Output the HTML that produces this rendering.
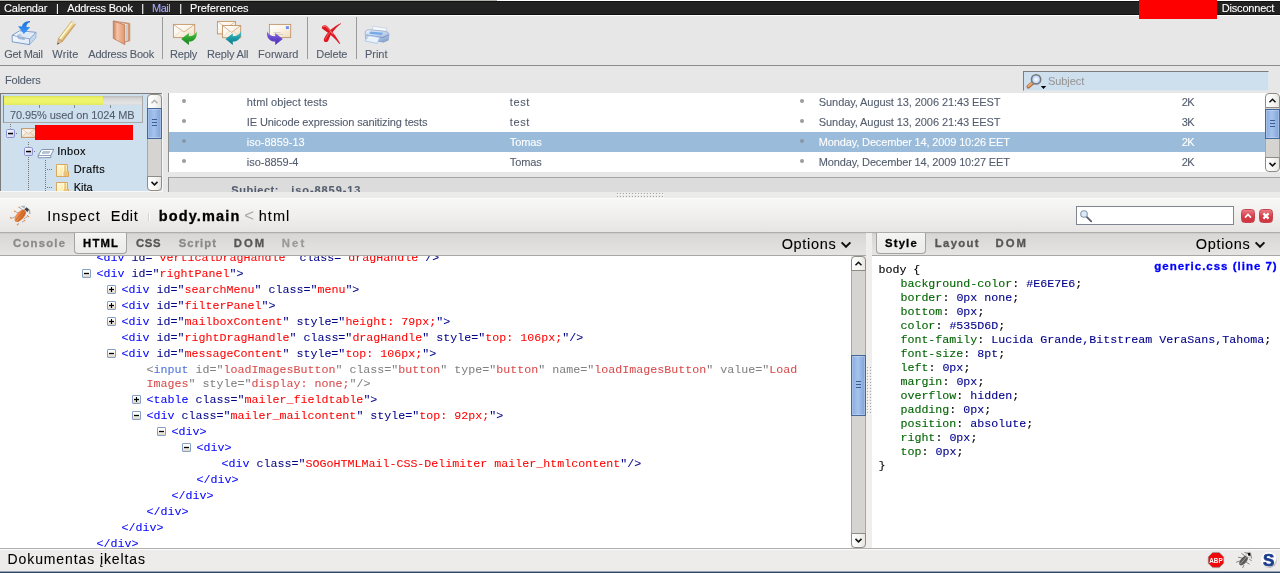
<!DOCTYPE html>
<html><head><meta charset="utf-8"><title>SOGo</title>
<style>
html,body{margin:0;padding:0;}
body{background:#E6E7E6;width:1280px;height:573px;overflow:hidden;font-family:"Liberation Sans",sans-serif;}
#root{will-change:transform;position:relative;width:1280px;height:573px;overflow:hidden;background:#E6E7E6;}
#root div,#root span,#root svg,#root i{position:absolute;box-sizing:border-box;}
.t{white-space:pre;-webkit-text-stroke:0.1px currentColor;}
#root .c span{position:static;}
.c{-webkit-text-stroke:0.04px currentColor;white-space:pre;font:11.667px/16px "Liberation Mono",monospace;color:#000088;height:16px;}
.c b{font-weight:normal;color:#ff0000;}
.c em{font-style:normal;color:#0000ff;}
.c.h{color:#808080;}
.c.h u{text-decoration:none;color:#4d72da;}
.c.h b{color:#d94a4a;}
.c.e{color:#0000ff;}
.s{-webkit-text-stroke:0.1px currentColor;white-space:pre;font:11.667px/14px "Liberation Mono",monospace;color:#000;height:14px;}
.s i{font-style:normal;color:#006400;position:static !important;}
.s b{font-weight:normal;color:#00008b;}
.tw{width:9px;height:9px;border:1px solid #86a0c2;border-radius:1px;background:linear-gradient(#fff 30%,#ddd6c8 100%);}
.tw:before{content:"";position:absolute;left:1px;top:3px;width:5px;height:1px;background:#000;box-shadow:0 .5px 0 rgba(0,0,0,.3),0 -.5px 0 rgba(0,0,0,.3);}
.tw.p:after{content:"";position:absolute;left:3px;top:1px;width:1px;height:5px;background:#000;box-shadow:.5px 0 0 rgba(0,0,0,.12),-.5px 0 0 rgba(0,0,0,.12);}
.sep{width:1px;background:#9a9a9a;top:17px;height:42px;}
.dot{width:4px;height:4px;border-radius:2px;background:#9a9a9a;}

</style></head>
<body>
<div id="root">
<!-- top strip -->
<div style="left:0;top:0;width:1280px;height:1px;background:#fff"></div>
<div style="left:0;top:0;width:497px;height:1px;background:#b3afab"></div>
<div style="left:0;top:1px;width:1280px;height:14px;background:#222;border-top:1px solid #111;border-bottom:1px solid #111"></div>
<div style="left:0;top:15px;width:1280px;height:1px;background:#fff"></div>
<div style="left:1139px;top:0;width:78px;height:19px;background:#fe0000"></div>
<!-- toolbar -->
<div style="left:0;top:65px;width:1280px;height:1px;background:#8c8c8c"></div>
<div class="sep" style="left:162px"></div>
<div class="sep" style="left:307px"></div>
<div class="sep" style="left:356px"></div>
<svg style="left:0;top:0" width="400" height="66" viewBox="0 0 400 66">
<defs>
<linearGradient id="gBlue" x1="0" y1="0" x2="0" y2="1"><stop offset="0" stop-color="#1c6fd8"/><stop offset="1" stop-color="#3f9bff"/></linearGradient>
<linearGradient id="gTray" x1="0" y1="0" x2="1" y2="1"><stop offset="0" stop-color="#ffffff"/><stop offset="1" stop-color="#d5e4f5"/></linearGradient>
<linearGradient id="gPen" x1="0" y1="0" x2="1" y2="1"><stop offset="0" stop-color="#fff6c4"/><stop offset=".5" stop-color="#ecd28e"/><stop offset="1" stop-color="#c9a25c"/></linearGradient>
<linearGradient id="gBook" x1="0" y1="0" x2="1" y2="0"><stop offset="0" stop-color="#c9805f"/><stop offset=".35" stop-color="#f7c4a4"/><stop offset="1" stop-color="#dc9672"/></linearGradient>
<linearGradient id="gEnv" x1="0" y1="0" x2="1" y2="1"><stop offset="0" stop-color="#ffffff"/><stop offset=".5" stop-color="#fbf3e6"/><stop offset="1" stop-color="#ecd9be"/></linearGradient>
<linearGradient id="gGreen" x1="0" y1="0" x2="0" y2="1"><stop offset="0" stop-color="#5cc85c"/><stop offset=".5" stop-color="#2ba32b"/><stop offset="1" stop-color="#1c7f1c"/></linearGradient>
<linearGradient id="gTeal" x1="0" y1="0" x2="0" y2="1"><stop offset="0" stop-color="#4cc0c8"/><stop offset=".5" stop-color="#1b9aa6"/><stop offset="1" stop-color="#107886"/></linearGradient>
<linearGradient id="gPurp" x1="0" y1="0" x2="0" y2="1"><stop offset="0" stop-color="#8c74e8"/><stop offset=".5" stop-color="#6848cc"/><stop offset="1" stop-color="#4c2cae"/></linearGradient>
<linearGradient id="gPrn" x1="0" y1="0" x2=".6" y2="1"><stop offset="0" stop-color="#eef2f9"/><stop offset=".55" stop-color="#c3d2ea"/><stop offset="1" stop-color="#8ea7d2"/></linearGradient>
</defs>
<!-- get mail -->
<g>
<path d="M19.6 30.8 L35.9 32.3 L35.6 37.8 L29.5 44.7 L12.2 41.8 L12.2 35.3 Z" fill="url(#gTray)" stroke="#7b9bcb" stroke-width="1" stroke-linejoin="round"/>
<path d="M29.7 38.9 L35.7 32.5 L35.5 37.7 L29.6 44.4 Z" fill="#c3d8f0"/>
<path d="M12.2 35.3 L29.6 38.9 L35.9 32.3 M29.6 38.9 L29.5 44.7" fill="none" stroke="#7b9bcb" stroke-width="0.9"/>
<path d="M15.4 35.2 L20.4 32.0 L32.6 33.3 L28.6 37.6 Z" fill="#dfe9f5"/>
<path d="M16.6 35.6 L19.8 33.6 L23.0 36.9 Z" fill="#b9cce2"/>
<path d="M16.8 36.6 L18.6 39.0 L24.6 40.1 L25.4 38.3 Z" fill="#9fb6d2"/>
<path d="M30 21 C25.5 21.2 22.4 23.2 22.0 26.6 L18.1 26.2 L23.8 34.1 L30.1 27.3 L26.4 27.0 C26.4 24.4 27.8 22.4 30 22.2 Z" fill="url(#gBlue)"/>
</g>
<!-- write (pencil) -->
<g>
<path d="M71.6 21.3 L75.8 24.0 L62.6 41.4 L58.4 38.6 Z" fill="url(#gPen)" stroke="#b8925a" stroke-width="0.6"/>
<path d="M72.4 22.6 L59.8 39.0" stroke="#fffbd6" stroke-width="1.3" fill="none"/>
<path d="M74.9 24.3 L62.2 40.6" stroke="#c49a58" stroke-width="0.9" fill="none"/>
<path d="M58.4 38.6 L62.6 41.4 L57.2 44.6 Z" fill="#dcb88c" stroke="#b08a5c" stroke-width="0.5"/>
<path d="M57.2 44.6 L57.9 42.4 L59.2 43.4 Z" fill="#4a4038"/>
<path d="M72.2 21.0 L76.1 23.6 L75.2 24.8 L71.3 22.2 Z" fill="#fbf6ea" stroke="#c9a678" stroke-width="0.4"/>
</g>
<!-- address book -->
<g>
<path d="M113.3 21.0 L129.8 23.4 L129.8 40.8 L124.8 42.0 Z" fill="#d99874" stroke="#c07e5e" stroke-width="0.7"/>
<path d="M115.6 21.8 L127.7 24.6 L127.7 40.2 L124.9 41.4 L124.9 24.8 Z" fill="#f6f4f2"/>
<path d="M126.0 24.6 L127.7 25.0 L127.7 40.2 L126.0 40.9 Z" fill="#c9c7c6"/>
<path d="M113.3 21.0 L124.8 24.9 L124.8 44.6 L113.3 38.4 Z" fill="url(#gBook)" stroke="#bd7a5b" stroke-width="0.8" stroke-linejoin="round"/>
</g>
<!-- reply -->
<g>
<rect x="173.4" y="24.4" width="21.3" height="13.2" fill="url(#gEnv)" stroke="#c29468" stroke-width="0.9"/>
<path d="M173.6 24.6 L184 32 L194.5 24.6" fill="none" stroke="#c9a27c" stroke-width="0.8"/>
<path d="M173.6 37.4 L181.5 30.6 M194.5 37.4 L186.5 30.6" fill="none" stroke="#e3cdb0" stroke-width="0.6"/>
<path d="M181.2 38.9 L188.9 33.0 L188.9 36.2 C192.6 36.2 195.4 34.6 196.6 31.4 C197.6 37.6 194.2 41.4 188.9 41.6 L188.9 45.0 Z" fill="url(#gGreen)"/>
</g>
<!-- reply all -->
<g>
<rect x="217.4" y="21.4" width="18.2" height="12.5" fill="url(#gEnv)" stroke="#c29468" stroke-width="0.9"/>
<path d="M217.6 21.6 L226.5 28 L235.4 21.6" fill="none" stroke="#d3b090" stroke-width="0.7"/>
<rect x="222.5" y="25.5" width="18.2" height="12.2" fill="url(#gEnv)" stroke="#c29468" stroke-width="0.9"/>
<path d="M222.7 25.7 L231.6 32.4 L240.5 25.7" fill="none" stroke="#c9a27c" stroke-width="0.8"/>
<path d="M222.7 37.5 L229.4 31 M240.5 37.5 L233.8 31" fill="none" stroke="#e3cdb0" stroke-width="0.6"/>
<path d="M225.5 38.9 L232.8 33.2 L232.8 36.2 C236.6 36.2 239.6 34.6 240.9 31.4 C241.9 37.6 238.4 41.4 232.8 41.6 L232.8 45.0 Z" fill="url(#gTeal)"/>
</g>
<!-- forward -->
<g>
<rect x="269.4" y="24.4" width="21.3" height="13.2" fill="url(#gEnv)" stroke="#c29468" stroke-width="0.9"/>
<rect x="285.9" y="26.2" width="3" height="2.8" fill="#6e8ff2"/>
<path d="M273.3 32.5 H280.6 M273.3 34.4 H283.4" stroke="#c9bca8" stroke-width="0.6"/>
<path d="M282.8 38.9 L275.2 33.0 L275.2 36.2 C271.4 36.2 268.4 34.6 267.1 31.4 C266.1 37.6 269.7 41.4 275.2 41.6 L275.2 45.0 Z" fill="url(#gPurp)"/>
</g>
<!-- delete X -->
<g fill="#e0161f">
<path d="M321.9 27.6 C322.2 25.2 325.4 24.4 327.4 26.4 C332.4 31.4 336.8 37.2 340.2 43.6 L339.4 44.1 C335.4 38.8 329.4 33.8 323.4 29.6 C322.3 28.9 321.8 28.4 321.9 27.6 Z"/>
<path d="M341.1 23.7 C335.6 27.6 330.6 33.4 328.4 40.4 C327.8 42.2 325.2 42.6 324.3 41.4 C323.5 40.2 323.8 38.8 324.6 37.4 C327.8 31.6 333.8 26.6 340.7 23.3 Z"/>
</g>
<path d="M323.0 27.2 C323.8 25.9 325.6 25.9 326.8 27.2 C329.2 29.6 331.2 32 333.2 34.6" fill="none" stroke="#f7959a" stroke-width="0.8"/>
<path d="M325.2 39.6 C326.6 36.4 328.8 33.4 331.4 30.8" fill="none" stroke="#f58a90" stroke-width="0.6"/>
<!-- print -->
<g>
<path d="M372.9 26.3 L386.9 28.2 L386.0 31.6 L372.0 30.0 Z" fill="#f6f8fb" stroke="#b7c4da" stroke-width="0.6"/>
<path d="M365.2 32.0 C365.4 30.4 367.4 29.6 370.4 29.8 L384.6 31.2 C387.4 31.6 389.0 32.6 388.9 34.4 L388.3 40.2 L383.4 42.2 L365.6 39.0 Z" fill="url(#gPrn)" stroke="#7d97c2" stroke-width="0.6"/>
<path d="M370.6 31.5 L383.2 32.8 L381.4 35.0 L369.0 33.7 Z" fill="#74aaea"/>
<path d="M366.0 35.0 L383.0 37.6 L388.6 35.0" fill="none" stroke="#6f8cbd" stroke-width="0.8"/>
<path d="M368.8 35.6 L379.8 37.4 L377.2 43.5 L365.0 40.9 Z" fill="#e9f2fc" stroke="#8fb5e6" stroke-width="0.6"/>
</g>
</svg>

<!-- search box -->
<div style="left:1023px;top:71px;width:246px;height:20px;background:#cedfee;border-top:1px solid #7c7c7c;border-left:1px solid #7c7c7c;border-bottom:1px solid #dfe6ec;border-right:1px solid #dfe6ec"></div>
<!-- folder tree -->
<div style="left:0;top:93px;width:163px;height:99px;background:#f7f7f7"></div>
<div id="tree" style="left:0;top:93px;width:162px;height:98px;background:#cedfee;border-top:1px solid #7c7c7c;border-left:1px solid #7c7c7c;overflow:hidden">
  <div style="left:2px;top:1px;width:140px;height:28px;border:1px solid #a8a8a8;border-top-color:transparent;border-left-color:#8c8c90"></div>
  <div style="left:3px;top:2px;width:138px;height:9px;background:linear-gradient(#bcbcbc,#d6d6d6 30%,#e4e4e4 80%,#dadada)"></div>
  <div style="left:3px;top:2px;width:99px;height:9px;background:linear-gradient(#dde25a,#eef56a 30%,#eef56a 70%,#e3e85d)"></div>
  <div style="left:38px;top:11px;width:1px;height:3px;background:#808890"></div>
  <div style="left:73px;top:11px;width:1px;height:3px;background:#808890"></div>
  <div style="left:109px;top:11px;width:1px;height:3px;background:#808890"></div>
  <div style="left:34px;top:31px;width:98px;height:15px;background:#fe0000"></div>
</div>
<!-- mail list -->
<div id="list" style="left:168px;top:93px;width:1112px;height:79px;background:#fff;border-left:1px solid #8e8e8e"></div>
<div style="left:169px;top:132px;width:1096px;height:20px;background:#9abbd9"></div>
<!-- message header -->
<div id="msg" style="left:168px;top:177px;width:1112px;height:15px;background:#dcdcdc;border-left:1px solid #8f8f8f;border-top:1px solid #a5a5a5;overflow:hidden">
</div>
<!-- firebug splitter + toolbar -->
<div style="left:0;top:192px;width:1280px;height:6px;background:#ebebea"></div>
<div style="left:0;top:198px;width:1280px;height:35px;background:linear-gradient(#f7f7f6,#f0efee 50%,#e6e5e3);border-top:1px solid #fbfbfb;border-bottom:1px solid #adadab"></div>
<div style="left:0;top:233px;width:1280px;height:23px;background:linear-gradient(#c6c5c3,#d8d7d5 6%,#e5e4e2);border-bottom:1px solid #a9a7a3"></div>
<div style="left:866px;top:233px;width:6px;height:316px;background:#efeeed"></div>
<!-- selected tabs -->
<div style="left:74px;top:233px;width:53px;height:21px;background:linear-gradient(#f4f4f3,#ebebea);border:1px solid #a3a3a3;border-top:none;border-radius:0 0 4px 4px"></div>
<div style="left:876px;top:233px;width:50px;height:21px;background:linear-gradient(#f4f4f3,#ebebea);border:1px solid #a3a3a3;border-top:none;border-radius:0 0 4px 4px"></div>
<!-- firebug search -->
<div style="left:1076px;top:206px;width:158px;height:19px;background:#fff;border:1px solid #7f8593"></div>
<!-- panels -->
<div id="hp" style="left:0;top:256px;width:851px;height:292px;background:#fff;overflow:hidden">
<div class="c " style="left:96.5px;top:-6.4px"><em>&lt;div</em> id= <b>verticalDragHandle</b>  class= <b>dragHandle</b> /&gt;</div>
<div class="c " style="left:96.5px;top:9.6px"><em>&lt;div</em> id="<b>rightPanel</b>"&gt;</div>
<div class="tw " style="left:82px;top:13px"></div>
<div class="c " style="left:121.5px;top:25.6px"><em>&lt;div</em> id="<b>searchMenu</b>" class="<b>menu</b>"&gt;</div>
<div class="tw p" style="left:107px;top:29px"></div>
<div class="c " style="left:121.5px;top:41.6px"><em>&lt;div</em> id="<b>filterPanel</b>"&gt;</div>
<div class="tw p" style="left:107px;top:45px"></div>
<div class="c " style="left:121.5px;top:57.6px"><em>&lt;div</em> id="<b>mailboxContent</b>" style="<b>height: 79px;</b>"&gt;</div>
<div class="tw p" style="left:107px;top:61px"></div>
<div class="c " style="left:121.5px;top:73.6px"><em>&lt;div</em> id="<b>rightDragHandle</b>" class="<b>dragHandle</b>" style="<b>top: 106px;</b>"/&gt;</div>
<div class="c " style="left:121.5px;top:89.6px"><em>&lt;div</em> id="<b>messageContent</b>" style="<b>top: 106px;</b>"&gt;</div>
<div class="tw " style="left:107px;top:93px"></div>
<div class="c h" style="left:146.5px;top:105.6px">&lt;<u>input</u> id="<b>loadImagesButton</b>" class="<b>button</b>" type="<b>button</b>" name="<b>loadImagesButton</b>" value="<b>Load</b></div>
<div class="c h" style="left:146.5px;top:119.6px"><b>Images</b>" style="<b>display: none;</b>"/&gt;</div>
<div class="c " style="left:146.5px;top:135.6px"><em>&lt;table</em> class="<b>mailer_fieldtable</b>"&gt;</div>
<div class="tw p" style="left:132px;top:139px"></div>
<div class="c " style="left:146.5px;top:151.6px"><em>&lt;div</em> class="<b>mailer_mailcontent</b>" style="<b>top: 92px;</b>"&gt;</div>
<div class="tw " style="left:132px;top:155px"></div>
<div class="c " style="left:171.5px;top:167.6px"><em>&lt;div&gt;</em></div>
<div class="tw " style="left:157px;top:171px"></div>
<div class="c " style="left:196.5px;top:183.6px"><em>&lt;div&gt;</em></div>
<div class="tw " style="left:182px;top:187px"></div>
<div class="c " style="left:221.5px;top:199.6px"><em>&lt;div</em> class="<b>SOGoHTMLMail-CSS-Delimiter mailer_htmlcontent</b>"/&gt;</div>
<div class="c e" style="left:196.5px;top:215.6px">&lt;/div&gt;</div>
<div class="c e" style="left:171.5px;top:231.6px">&lt;/div&gt;</div>
<div class="c e" style="left:146.5px;top:247.6px">&lt;/div&gt;</div>
<div class="c e" style="left:121.5px;top:263.6px">&lt;/div&gt;</div>
<div class="c e" style="left:96.5px;top:279.6px">&lt;/div&gt;</div>
</div>
<div id="sp" style="left:872px;top:256px;width:408px;height:292px;background:#fff;overflow:hidden">
<div class="s" style="left:6.4px;top:6.8px">body {</div>
<div class="s" style="left:28.4px;top:20.8px"><i>background-color</i>: <b>#E6E7E6</b>;</div>
<div class="s" style="left:28.4px;top:34.8px"><i>border</i>: <b>0px none</b>;</div>
<div class="s" style="left:28.4px;top:48.8px"><i>bottom</i>: <b>0px</b>;</div>
<div class="s" style="left:28.4px;top:62.8px"><i>color</i>: <b>#535D6D</b>;</div>
<div class="s" style="left:28.4px;top:76.8px"><i>font-family</i>: <b>Lucida Grande,Bitstream VeraSans,Tahoma</b>;</div>
<div class="s" style="left:28.4px;top:90.8px"><i>font-size</i>: <b>8pt</b>;</div>
<div class="s" style="left:28.4px;top:104.8px"><i>left</i>: <b>0px</b>;</div>
<div class="s" style="left:28.4px;top:118.8px"><i>margin</i>: <b>0px</b>;</div>
<div class="s" style="left:28.4px;top:132.8px"><i>overflow</i>: <b>hidden</b>;</div>
<div class="s" style="left:28.4px;top:146.8px"><i>padding</i>: <b>0px</b>;</div>
<div class="s" style="left:28.4px;top:160.8px"><i>position</i>: <b>absolute</b>;</div>
<div class="s" style="left:28.4px;top:174.8px"><i>right</i>: <b>0px</b>;</div>
<div class="s" style="left:28.4px;top:188.8px"><i>top</i>: <b>0px</b>;</div>
<div class="s" style="left:6.4px;top:202.8px">}</div>
</div>
<div style="left:147px;top:104px;width:15px;height:77px;background:#d6d4d0;border-left:1px solid #aaa7a2;border-right:1px solid #aaa7a2"></div>
<div style="left:147px;top:94px;width:15px;height:15px;background:linear-gradient(90deg,#ffffff,#f6f6f4 55%,#e6e5e2);border:1px solid #8f8c86;border-radius:4px 4px 0 0"></div>
<div style="left:147px;top:176px;width:15px;height:15px;background:linear-gradient(90deg,#ffffff,#f6f6f4 55%,#e6e5e2);border:1px solid #8f8c86;border-radius:0 0 4px 4px"></div>
<svg style="left:147px;top:94px" width="15" height="15" viewBox="0 0 15 15"><path d="M4.5 9.3 L7.5 6.3 L10.5 9.3" fill="none" stroke="#b4b2ae" stroke-width="1.5"/></svg>
<svg style="left:147px;top:176px" width="15" height="15" viewBox="0 0 15 15"><path d="M4.5 5.9 L7.5 8.9 L10.5 5.9" fill="none" stroke="#111" stroke-width="1.5"/></svg>
<div style="left:147px;top:108px;width:15px;height:31px;background:linear-gradient(90deg,#86abe0,#a7c3ec 45%,#7fa3d8);border:1px solid #44679c;box-shadow:inset 0 0 0 1px rgba(255,255,255,.25)"></div>
<div style="left:152px;top:119px;width:5px;height:1px;background:#3a5f95"></div>
<div style="left:152px;top:122px;width:5px;height:1px;background:#3a5f95"></div>
<div style="left:152px;top:125px;width:5px;height:1px;background:#3a5f95"></div>
<div style="left:1265px;top:103px;width:15px;height:59px;background:#d6d4d0;border-left:1px solid #aaa7a2;border-right:1px solid #aaa7a2"></div>
<div style="left:1265px;top:93px;width:15px;height:15px;background:linear-gradient(90deg,#ffffff,#f6f6f4 55%,#e6e5e2);border:1px solid #8f8c86;border-radius:4px 4px 0 0"></div>
<div style="left:1265px;top:157px;width:15px;height:15px;background:linear-gradient(90deg,#ffffff,#f6f6f4 55%,#e6e5e2);border:1px solid #8f8c86;border-radius:0 0 4px 4px"></div>
<svg style="left:1265px;top:93px" width="15" height="15" viewBox="0 0 15 15"><path d="M4.5 9.3 L7.5 6.3 L10.5 9.3" fill="none" stroke="#111" stroke-width="1.5"/></svg>
<svg style="left:1265px;top:157px" width="15" height="15" viewBox="0 0 15 15"><path d="M4.5 5.9 L7.5 8.9 L10.5 5.9" fill="none" stroke="#111" stroke-width="1.5"/></svg>
<div style="left:1265px;top:109px;width:15px;height:30px;background:linear-gradient(90deg,#86abe0,#a7c3ec 45%,#7fa3d8);border:1px solid #44679c;box-shadow:inset 0 0 0 1px rgba(255,255,255,.25)"></div>
<div style="left:1270px;top:120px;width:5px;height:1px;background:#3a5f95"></div>
<div style="left:1270px;top:123px;width:5px;height:1px;background:#3a5f95"></div>
<div style="left:1270px;top:126px;width:5px;height:1px;background:#3a5f95"></div>
<div style="left:851px;top:266px;width:15px;height:272px;background:#d6d4d0;border-left:1px solid #aaa7a2;border-right:1px solid #aaa7a2"></div>
<div style="left:851px;top:256px;width:15px;height:15px;background:linear-gradient(90deg,#ffffff,#f6f6f4 55%,#e6e5e2);border:1px solid #8f8c86;border-radius:4px 4px 0 0"></div>
<div style="left:851px;top:533px;width:15px;height:15px;background:linear-gradient(90deg,#ffffff,#f6f6f4 55%,#e6e5e2);border:1px solid #8f8c86;border-radius:0 0 4px 4px"></div>
<svg style="left:851px;top:256px" width="15" height="15" viewBox="0 0 15 15"><path d="M4.5 9.3 L7.5 6.3 L10.5 9.3" fill="none" stroke="#111" stroke-width="1.5"/></svg>
<svg style="left:851px;top:533px" width="15" height="15" viewBox="0 0 15 15"><path d="M4.5 5.9 L7.5 8.9 L10.5 5.9" fill="none" stroke="#111" stroke-width="1.5"/></svg>
<div style="left:851px;top:355px;width:15px;height:61px;background:linear-gradient(90deg,#86abe0,#a7c3ec 45%,#7fa3d8);border:1px solid #44679c;box-shadow:inset 0 0 0 1px rgba(255,255,255,.25)"></div>
<div style="left:856px;top:381px;width:5px;height:1px;background:#3a5f95"></div>
<div style="left:856px;top:384px;width:5px;height:1px;background:#3a5f95"></div>
<div style="left:856px;top:387px;width:5px;height:1px;background:#3a5f95"></div>
<!-- status bar -->
<!--ICONS2AFTER-->
<div style="left:0;top:548px;width:1280px;height:25px;background:#edecea;border-top:1px solid #aeaeae"></div>
<div style="left:0;top:549px;width:1280px;height:1px;background:#fbfbfb"></div>
<div style="left:0;top:572px;width:1280px;height:1px;background:#2f4a6b"></div>
<div style="left:0;top:571px;width:1280px;height:1px;background:#97a2b3"></div>

<!-- tree icons/dots -->
<svg style="left:0;top:93px" width="147" height="98" viewBox="0 93 147 98">
<defs>
<linearGradient id="gBox" x1="0" y1="0" x2="1" y2="1"><stop offset="0" stop-color="#ffffff"/><stop offset="1" stop-color="#c6cdf0"/></linearGradient>
<linearGradient id="gFold" x1="0" y1="0" x2="1" y2="1"><stop offset="0" stop-color="#fffdf0"/><stop offset=".45" stop-color="#fdeeb8"/><stop offset="1" stop-color="#f6d27e"/></linearGradient>
<linearGradient id="gEnv2" x1="0" y1="0" x2="1" y2="1"><stop offset="0" stop-color="#ffffff"/><stop offset="1" stop-color="#ecd9be"/></linearGradient>
</defs>
<g stroke="#777" stroke-width="1" stroke-dasharray="1 1" fill="none">
<path d="M10.5 124 V128.5"/><path d="M16 133.5 H18"/>
<path d="M28.5 142 V146.5"/><path d="M28.5 157 V191"/><path d="M34 151.5 H36"/>
<path d="M45.5 160 V191"/><path d="M47 169.5 H53"/><path d="M47 187.5 H53"/>
</g>
<rect x="6.5" y="129.5" width="8" height="8" rx="1.2" fill="url(#gBox)" stroke="#8d92d2"/>
<rect x="8" y="132.8" width="5" height="1.5" fill="#000"/>
<rect x="24.5" y="147.5" width="8" height="8" rx="1.2" fill="url(#gBox)" stroke="#8d92d2"/>
<rect x="26" y="150.8" width="5" height="1.5" fill="#000"/>
<!-- mail icon -->
<rect x="21.5" y="128.6" width="14" height="8.8" fill="url(#gEnv2)" stroke="#c29468"/>
<path d="M22 129 L28.5 134 L35 129 M22 137 L26.8 132.8 M35 137 L30.2 132.8" fill="none" stroke="#d7b692" stroke-width="0.7"/>
<rect x="35" y="125" width="98" height="15" fill="#fe0000"/>
<!-- inbox tray -->
<path d="M41.6 149.6 L53.8 149.4 L50.8 155.4 L50.8 157.6 L38.2 157.8 L38.2 155.6 Z" fill="#ffffff" stroke="#7088aa" stroke-width="0.9" stroke-linejoin="round"/>
<path d="M38.2 155.6 L50.8 155.4" stroke="#7088aa" stroke-width="0.8"/>
<path d="M43 151.6 L50 151.5 L49 153.3 L42 153.4 Z" fill="#b6c4d6" stroke="#8ea0b8" stroke-width="0.5"/>
<!-- folders -->
<g><path d="M56.5 164.5 H67.5 V171.5 H68.5 V176.5 H56.5 Z" fill="url(#gFold)" stroke="#d8a75e" stroke-width="1"/>
<path d="M64.3 165.2 H65.9 V171.2 L67.8 172.2 V176 H63.3 V172.2 L64.3 171.2 Z" fill="#eac27a"/>
<path d="M63.6 165.2 V171.4 L62.8 172.2 V176" stroke="#fffdf0" stroke-width="0.9" fill="none"/></g>
<g transform="translate(0,18)"><path d="M56.5 164.5 H67.5 V171.5 H68.5 V176.5 H56.5 Z" fill="url(#gFold)" stroke="#d8a75e" stroke-width="1"/>
<path d="M64.3 165.2 H65.9 V171.2 L67.8 172.2 V176 H63.3 V172.2 L64.3 171.2 Z" fill="#eac27a"/>
<path d="M63.6 165.2 V171.4 L62.8 172.2 V176" stroke="#fffdf0" stroke-width="0.9" fill="none"/></g>
</svg>
<!-- SOGo search magnifier -->
<svg style="left:1024px;top:72px" width="26" height="19" viewBox="1024 72 26 19">
<defs><radialGradient id="gLens" cx=".5" cy=".5" r=".6"><stop offset="0" stop-color="#ffffff"/><stop offset=".9" stop-color="#a4c8f6"/></radialGradient></defs>
<path d="M1032.8 82.8 L1028.4 86.7" stroke="#b06c3c" stroke-width="3.8" stroke-linecap="round"/>
<path d="M1032.4 82.8 L1028.5 86.3" stroke="#eaa870" stroke-width="2.0" stroke-linecap="round"/>
<circle cx="1036.1" cy="79.4" r="4.6" fill="url(#gLens)" stroke="#777" stroke-width="1.6"/>
<path d="M1040.8 86.1 H1046.2 L1043.5 89 Z" fill="#000"/>
</svg>
<!-- dots in list -->
<div class="dot" style="left:182px;top:99px;background:#9c9c9c"></div>
<div class="dot" style="left:800px;top:99px;background:#9c9c9c"></div>
<div class="dot" style="left:182px;top:119px;background:#9c9c9c"></div>
<div class="dot" style="left:800px;top:119px;background:#9c9c9c"></div>
<div class="dot" style="left:182px;top:139px;background:#8797a6"></div>
<div class="dot" style="left:800px;top:139px;background:#8797a6"></div>
<div class="dot" style="left:182px;top:159px;background:#9c9c9c"></div>
<div class="dot" style="left:800px;top:159px;background:#9c9c9c"></div>
<!-- splitter grips -->
<svg style="left:617px;top:193px" width="48" height="5" viewBox="0 0 48 5" shape-rendering="crispEdges"><rect x="0" y="0" width="1" height="1" fill="#a9a9a7"/><rect x="1" y="1" width="1" height="1" fill="#fbfbfb"/><rect x="0" y="3" width="1" height="1" fill="#a9a9a7"/><rect x="1" y="4" width="1" height="1" fill="#fbfbfb"/><rect x="3" y="0" width="1" height="1" fill="#a9a9a7"/><rect x="4" y="1" width="1" height="1" fill="#fbfbfb"/><rect x="3" y="3" width="1" height="1" fill="#a9a9a7"/><rect x="4" y="4" width="1" height="1" fill="#fbfbfb"/><rect x="6" y="0" width="1" height="1" fill="#a9a9a7"/><rect x="7" y="1" width="1" height="1" fill="#fbfbfb"/><rect x="6" y="3" width="1" height="1" fill="#a9a9a7"/><rect x="7" y="4" width="1" height="1" fill="#fbfbfb"/><rect x="9" y="0" width="1" height="1" fill="#a9a9a7"/><rect x="10" y="1" width="1" height="1" fill="#fbfbfb"/><rect x="9" y="3" width="1" height="1" fill="#a9a9a7"/><rect x="10" y="4" width="1" height="1" fill="#fbfbfb"/><rect x="12" y="0" width="1" height="1" fill="#a9a9a7"/><rect x="13" y="1" width="1" height="1" fill="#fbfbfb"/><rect x="12" y="3" width="1" height="1" fill="#a9a9a7"/><rect x="13" y="4" width="1" height="1" fill="#fbfbfb"/><rect x="15" y="0" width="1" height="1" fill="#a9a9a7"/><rect x="16" y="1" width="1" height="1" fill="#fbfbfb"/><rect x="15" y="3" width="1" height="1" fill="#a9a9a7"/><rect x="16" y="4" width="1" height="1" fill="#fbfbfb"/><rect x="18" y="0" width="1" height="1" fill="#a9a9a7"/><rect x="19" y="1" width="1" height="1" fill="#fbfbfb"/><rect x="18" y="3" width="1" height="1" fill="#a9a9a7"/><rect x="19" y="4" width="1" height="1" fill="#fbfbfb"/><rect x="21" y="0" width="1" height="1" fill="#a9a9a7"/><rect x="22" y="1" width="1" height="1" fill="#fbfbfb"/><rect x="21" y="3" width="1" height="1" fill="#a9a9a7"/><rect x="22" y="4" width="1" height="1" fill="#fbfbfb"/><rect x="24" y="0" width="1" height="1" fill="#a9a9a7"/><rect x="25" y="1" width="1" height="1" fill="#fbfbfb"/><rect x="24" y="3" width="1" height="1" fill="#a9a9a7"/><rect x="25" y="4" width="1" height="1" fill="#fbfbfb"/><rect x="27" y="0" width="1" height="1" fill="#a9a9a7"/><rect x="28" y="1" width="1" height="1" fill="#fbfbfb"/><rect x="27" y="3" width="1" height="1" fill="#a9a9a7"/><rect x="28" y="4" width="1" height="1" fill="#fbfbfb"/><rect x="30" y="0" width="1" height="1" fill="#a9a9a7"/><rect x="31" y="1" width="1" height="1" fill="#fbfbfb"/><rect x="30" y="3" width="1" height="1" fill="#a9a9a7"/><rect x="31" y="4" width="1" height="1" fill="#fbfbfb"/><rect x="33" y="0" width="1" height="1" fill="#a9a9a7"/><rect x="34" y="1" width="1" height="1" fill="#fbfbfb"/><rect x="33" y="3" width="1" height="1" fill="#a9a9a7"/><rect x="34" y="4" width="1" height="1" fill="#fbfbfb"/><rect x="36" y="0" width="1" height="1" fill="#a9a9a7"/><rect x="37" y="1" width="1" height="1" fill="#fbfbfb"/><rect x="36" y="3" width="1" height="1" fill="#a9a9a7"/><rect x="37" y="4" width="1" height="1" fill="#fbfbfb"/><rect x="39" y="0" width="1" height="1" fill="#a9a9a7"/><rect x="40" y="1" width="1" height="1" fill="#fbfbfb"/><rect x="39" y="3" width="1" height="1" fill="#a9a9a7"/><rect x="40" y="4" width="1" height="1" fill="#fbfbfb"/><rect x="42" y="0" width="1" height="1" fill="#a9a9a7"/><rect x="43" y="1" width="1" height="1" fill="#fbfbfb"/><rect x="42" y="3" width="1" height="1" fill="#a9a9a7"/><rect x="43" y="4" width="1" height="1" fill="#fbfbfb"/><rect x="45" y="0" width="1" height="1" fill="#a9a9a7"/><rect x="46" y="1" width="1" height="1" fill="#fbfbfb"/><rect x="45" y="3" width="1" height="1" fill="#a9a9a7"/><rect x="46" y="4" width="1" height="1" fill="#fbfbfb"/></svg>
<!-- firebug bug -->
<svg style="left:8px;top:203px" width="26" height="26" viewBox="8 203 26 26">
<defs><linearGradient id="gBug" x1="0" y1="0" x2="1" y2="1"><stop offset="0" stop-color="#f6a568"/><stop offset=".5" stop-color="#e87d38"/><stop offset="1" stop-color="#d7601c"/></linearGradient></defs>
<g fill="none" stroke="#9aa4b4" stroke-width="0.9" stroke-linecap="round">
<path d="M23.5 210.5 L19.5 207.5"/><path d="M19.8 213.5 L16.5 212.2 L14.8 211.3"/><path d="M15.8 216.5 L12.5 218 L10.8 217.8"/>
<path d="M27.2 215.2 L28.5 216.6"/><path d="M24.2 218.8 L27.6 216.2"/><path d="M22.2 222 L24.6 220.6"/><path d="M18.6 223.6 L17.4 224.6"/>
<path d="M25 208 L21.5 206.4 L24.8 206.2"/><path d="M29 210.2 L29.9 213.8 L29.6 210"/>
</g>
<g fill="#e9964c"><circle cx="19.2" cy="207.4" r=".8"/><circle cx="14.6" cy="211.3" r=".8"/><circle cx="10.8" cy="217.8" r=".9"/><circle cx="28.4" cy="216.6" r=".8"/><circle cx="24.6" cy="220.6" r=".8"/><circle cx="17.6" cy="224.6" r=".9"/></g>
<ellipse cx="20.2" cy="215.8" rx="7.6" ry="3.9" transform="rotate(-49 20.2 215.8)" fill="url(#gBug)"/>
<path d="M15.5 220.5 L24 210.6 M17.6 221.8 L25.8 212.4" stroke="#8a4a24" stroke-width="0.7" opacity=".75" fill="none"/>
<path d="M24.2 209.6 L26.6 207.2 L29.2 209.6 L27.2 212.2 Z" fill="#444446"/>
<path d="M24.4 209.8 L27.0 212.2" stroke="#f3e9dc" stroke-width="0.8"/>
</svg>
<!-- firebug small separator -->
<div style="left:148px;top:213px;width:1px;height:8px;background:#d4d3d1"></div><div style="left:149px;top:213px;width:1px;height:8px;background:#fbfbfb"></div>
<!-- firebug magnifier -->
<svg style="left:1078px;top:208px" width="16" height="16" viewBox="1078 208 16 16">
<path d="M1086.2 216.4 L1091.2 221.4" stroke="#5a5f66" stroke-width="1.8" stroke-linecap="round"/>
<circle cx="1084" cy="214" r="3.3" fill="#dcebfa" stroke="#8a9aac" stroke-width="1.1"/>
</svg>
<!-- red buttons -->
<div style="left:1241px;top:209px;width:14px;height:14px;background:linear-gradient(#ea7c84,#d63c48 55%,#cf3440);border-radius:3.5px;border:1px solid #c64450"></div>
<div style="left:1259px;top:209px;width:14px;height:14px;background:linear-gradient(#ea7c84,#d63c48 55%,#cf3440);border-radius:3.5px;border:1px solid #c64450"></div>
<svg style="left:1241px;top:209px" width="32" height="14" viewBox="1241 209 32 14">
<path d="M1245 217.6 L1248 214.4 L1251 217.6" fill="none" stroke="#fff" stroke-width="1.7"/>
<path d="M1263.4 213.4 L1268.6 218.6 M1268.6 213.4 L1263.4 218.6" fill="none" stroke="#fff" stroke-width="2.2"/>
</svg>
<!-- Options chevrons -->
<svg style="left:840px;top:240px" width="12" height="10" viewBox="840 240 12 10"><path d="M841.6 242.4 L846 246.8 L850.4 242.4" fill="none" stroke="#111" stroke-width="2"/></svg>
<svg style="left:1254px;top:240px" width="12" height="10" viewBox="1254 240 12 10"><path d="M1255.6 242.4 L1260 246.8 L1264.4 242.4" fill="none" stroke="#111" stroke-width="2"/></svg>
<!-- vertical splitter grip -->
<svg style="left:867px;top:367px" width="5" height="48" viewBox="0 0 5 48" shape-rendering="crispEdges"><rect x="0" y="0" width="1" height="1" fill="#a9a9a7"/><rect x="1" y="1" width="1" height="1" fill="#fbfbfb"/><rect x="3" y="0" width="1" height="1" fill="#a9a9a7"/><rect x="4" y="1" width="1" height="1" fill="#fbfbfb"/><rect x="0" y="3" width="1" height="1" fill="#a9a9a7"/><rect x="1" y="4" width="1" height="1" fill="#fbfbfb"/><rect x="3" y="3" width="1" height="1" fill="#a9a9a7"/><rect x="4" y="4" width="1" height="1" fill="#fbfbfb"/><rect x="0" y="6" width="1" height="1" fill="#a9a9a7"/><rect x="1" y="7" width="1" height="1" fill="#fbfbfb"/><rect x="3" y="6" width="1" height="1" fill="#a9a9a7"/><rect x="4" y="7" width="1" height="1" fill="#fbfbfb"/><rect x="0" y="9" width="1" height="1" fill="#a9a9a7"/><rect x="1" y="10" width="1" height="1" fill="#fbfbfb"/><rect x="3" y="9" width="1" height="1" fill="#a9a9a7"/><rect x="4" y="10" width="1" height="1" fill="#fbfbfb"/><rect x="0" y="12" width="1" height="1" fill="#a9a9a7"/><rect x="1" y="13" width="1" height="1" fill="#fbfbfb"/><rect x="3" y="12" width="1" height="1" fill="#a9a9a7"/><rect x="4" y="13" width="1" height="1" fill="#fbfbfb"/><rect x="0" y="15" width="1" height="1" fill="#a9a9a7"/><rect x="1" y="16" width="1" height="1" fill="#fbfbfb"/><rect x="3" y="15" width="1" height="1" fill="#a9a9a7"/><rect x="4" y="16" width="1" height="1" fill="#fbfbfb"/><rect x="0" y="18" width="1" height="1" fill="#a9a9a7"/><rect x="1" y="19" width="1" height="1" fill="#fbfbfb"/><rect x="3" y="18" width="1" height="1" fill="#a9a9a7"/><rect x="4" y="19" width="1" height="1" fill="#fbfbfb"/><rect x="0" y="21" width="1" height="1" fill="#a9a9a7"/><rect x="1" y="22" width="1" height="1" fill="#fbfbfb"/><rect x="3" y="21" width="1" height="1" fill="#a9a9a7"/><rect x="4" y="22" width="1" height="1" fill="#fbfbfb"/><rect x="0" y="24" width="1" height="1" fill="#a9a9a7"/><rect x="1" y="25" width="1" height="1" fill="#fbfbfb"/><rect x="3" y="24" width="1" height="1" fill="#a9a9a7"/><rect x="4" y="25" width="1" height="1" fill="#fbfbfb"/><rect x="0" y="27" width="1" height="1" fill="#a9a9a7"/><rect x="1" y="28" width="1" height="1" fill="#fbfbfb"/><rect x="3" y="27" width="1" height="1" fill="#a9a9a7"/><rect x="4" y="28" width="1" height="1" fill="#fbfbfb"/><rect x="0" y="30" width="1" height="1" fill="#a9a9a7"/><rect x="1" y="31" width="1" height="1" fill="#fbfbfb"/><rect x="3" y="30" width="1" height="1" fill="#a9a9a7"/><rect x="4" y="31" width="1" height="1" fill="#fbfbfb"/><rect x="0" y="33" width="1" height="1" fill="#a9a9a7"/><rect x="1" y="34" width="1" height="1" fill="#fbfbfb"/><rect x="3" y="33" width="1" height="1" fill="#a9a9a7"/><rect x="4" y="34" width="1" height="1" fill="#fbfbfb"/><rect x="0" y="36" width="1" height="1" fill="#a9a9a7"/><rect x="1" y="37" width="1" height="1" fill="#fbfbfb"/><rect x="3" y="36" width="1" height="1" fill="#a9a9a7"/><rect x="4" y="37" width="1" height="1" fill="#fbfbfb"/><rect x="0" y="39" width="1" height="1" fill="#a9a9a7"/><rect x="1" y="40" width="1" height="1" fill="#fbfbfb"/><rect x="3" y="39" width="1" height="1" fill="#a9a9a7"/><rect x="4" y="40" width="1" height="1" fill="#fbfbfb"/><rect x="0" y="42" width="1" height="1" fill="#a9a9a7"/><rect x="1" y="43" width="1" height="1" fill="#fbfbfb"/><rect x="3" y="42" width="1" height="1" fill="#a9a9a7"/><rect x="4" y="43" width="1" height="1" fill="#fbfbfb"/><rect x="0" y="45" width="1" height="1" fill="#a9a9a7"/><rect x="1" y="46" width="1" height="1" fill="#fbfbfb"/><rect x="3" y="45" width="1" height="1" fill="#a9a9a7"/><rect x="4" y="46" width="1" height="1" fill="#fbfbfb"/></svg>
<!-- status icons -->
<svg style="left:1206px;top:550px" width="74" height="20" viewBox="1206 550 74 20">
<defs><radialGradient id="gS" cx=".4" cy=".35" r=".7"><stop offset="0" stop-color="#ffffff"/><stop offset=".75" stop-color="#fbfbfb"/><stop offset="1" stop-color="#9a9a9a"/></radialGradient></defs>
<path d="M1212.7 552.4 H1219.2 L1223.7 556.9 V563.3 L1219.2 567.6 H1212.7 L1208.2 563.3 V556.9 Z" fill="#ee0a0a" stroke="#7aa3a0" stroke-width="0.6"/>
<text x="1215.95" y="563.4" font-family="'Liberation Sans',sans-serif" font-weight="bold" font-size="7.6" fill="#fff" text-anchor="middle" textLength="13.4" lengthAdjust="spacingAndGlyphs">ABP</text>
<!-- grey bug -->
<g fill="none" stroke="#6a6a6a" stroke-width="0.8" stroke-linecap="round">
<path d="M1244.6 555.6 L1241.8 553.6"/><path d="M1241.6 558 L1238.4 557.2"/><path d="M1239.6 561 L1236.4 562.2"/>
<path d="M1249.6 559.4 L1251.4 560.6"/><path d="M1246.6 562.4 L1249.2 564"/><path d="M1243.8 565.4 L1242.8 567.6"/>
<path d="M1247.4 553.2 L1244.8 552.6"/><path d="M1250.8 555.4 L1251.6 558.2"/>
</g>
<ellipse cx="1243.6" cy="560.6" rx="5.8" ry="3.0" transform="rotate(-49 1243.6 560.6)" fill="#5a5a5a"/>
<path d="M1240.4 564 L1246.6 556.8" stroke="#c8c8c8" stroke-width="0.6"/>
<circle cx="1248.6" cy="554.8" r="2.6" fill="#f4f4f4" stroke="#8a8a8a" stroke-width="0.5"/>
<path d="M1247.2 553 L1250.2 552.8 L1250.8 555.6 L1248.6 556 Z" fill="#111"/>
<!-- S -->
<circle cx="1269" cy="559.8" r="7.9" fill="url(#gS)"/>
<text x="1268.6" y="566" font-family="'Liberation Sans',sans-serif" font-weight="bold" font-size="17" fill="#1a3c8c" stroke="#1a3c8c" stroke-width=".7" text-anchor="middle">S</text>
</svg>


<span class="t" style="left:4.09px;top:1.00px;font:11px/15px 'Liberation Sans',sans-serif;color:#ffffff;letter-spacing:-0.199px;">Calendar</span>
<span class="t" style="left:55.94px;top:1.00px;font:11px/15px 'Liberation Sans',sans-serif;color:#ffffff;">|</span>
<span class="t" style="left:67.34px;top:1.00px;font:11px/15px 'Liberation Sans',sans-serif;color:#ffffff;letter-spacing:-0.262px;">Address Book</span>
<span class="t" style="left:141.24px;top:1.00px;font:11px/15px 'Liberation Sans',sans-serif;color:#ffffff;">|</span>
<span class="t" style="left:152.09px;top:1.00px;font:11px/15px 'Liberation Sans',sans-serif;color:#aaaaff;letter-spacing:-0.524px;">Mail</span>
<span class="t" style="left:179.34px;top:1.00px;font:11px/15px 'Liberation Sans',sans-serif;color:#ffffff;">|</span>
<span class="t" style="left:189.94px;top:1.00px;font:11px/15px 'Liberation Sans',sans-serif;color:#ffffff;letter-spacing:-0.081px;">Preferences</span>
<span class="t" style="left:1221.84px;top:1.00px;font:11px/15px 'Liberation Sans',sans-serif;color:#ffffff;letter-spacing:-0.202px;">Disconnect</span>
<span class="t" style="left:4.34px;top:47.00px;font:11px/15px 'Liberation Sans',sans-serif;color:#535D6D;letter-spacing:-0.338px;">Get Mail</span>
<span class="t" style="left:52.34px;top:47.00px;font:11px/15px 'Liberation Sans',sans-serif;color:#535D6D;letter-spacing:0.158px;">Write</span>
<span class="t" style="left:88.34px;top:47.00px;font:11px/15px 'Liberation Sans',sans-serif;color:#535D6D;letter-spacing:-0.239px;">Address Book</span>
<span class="t" style="left:169.94px;top:47.00px;font:11px/15px 'Liberation Sans',sans-serif;color:#535D6D;letter-spacing:-0.181px;">Reply</span>
<span class="t" style="left:207.09px;top:47.00px;font:11px/15px 'Liberation Sans',sans-serif;color:#535D6D;letter-spacing:-0.181px;">Reply All</span>
<span class="t" style="left:258.09px;top:47.00px;font:11px/15px 'Liberation Sans',sans-serif;color:#535D6D;">Forward</span>
<span class="t" style="left:316.34px;top:47.00px;font:11px/15px 'Liberation Sans',sans-serif;color:#535D6D;letter-spacing:-0.139px;">Delete</span>
<span class="t" style="left:364.94px;top:47.00px;font:11px/15px 'Liberation Sans',sans-serif;color:#535D6D;letter-spacing:-0.031px;">Print</span>
<span class="t" style="left:4.94px;top:73.00px;font:11px/15px 'Liberation Sans',sans-serif;color:#535D6D;letter-spacing:-0.165px;">Folders</span>
<span class="t" style="left:1047.94px;top:73.50px;font:11px/15px 'Liberation Sans',sans-serif;color:#999999;letter-spacing:-0.067px;">Subject</span>
<span class="t" style="left:10.04px;top:108.00px;font:11px/15px 'Liberation Sans',sans-serif;color:#535D6D;letter-spacing:-0.095px;">70.95% used on 1024 MB</span>
<span class="t" style="left:57.14px;top:144.00px;font:11px/15px 'Liberation Sans',sans-serif;color:#000;letter-spacing:0.345px;">Inbox</span>
<span class="t" style="left:73.74px;top:162.00px;font:11px/15px 'Liberation Sans',sans-serif;color:#000;letter-spacing:0.311px;">Drafts</span>
<div style="left:60px;top:175px;width:80px;height:16px;overflow:hidden"><span class="t" style="left:13.74px;top:5.00px;font:11px/15px 'Liberation Sans',sans-serif;color:#000;letter-spacing:0.010px;">Kita</span></div>
<div style="left:200px;top:178px;width:400px;height:14px;overflow:hidden"><span class="t" style="left:31.34px;top:5.00px;font:bold 11px/15px 'Liberation Sans',sans-serif;color:#535D6D;letter-spacing:0.528px;">Subject:</span></div>
<div style="left:200px;top:178px;width:400px;height:14px;overflow:hidden"><span class="t" style="left:91.34px;top:5.00px;font:bold 11px/15px 'Liberation Sans',sans-serif;color:#535D6D;letter-spacing:0.916px;">iso-8859-13</span></div>
<span class="t" style="left:246.84px;top:95.00px;font:11px/15px 'Liberation Sans',sans-serif;color:#535D6D;letter-spacing:0.070px;">html object tests</span>
<span class="t" style="left:509.84px;top:95.00px;font:11px/15px 'Liberation Sans',sans-serif;color:#535D6D;letter-spacing:0.622px;">test</span>
<span class="t" style="left:818.84px;top:95.00px;font:11px/15px 'Liberation Sans',sans-serif;color:#535D6D;letter-spacing:-0.088px;">Sunday, August 13, 2006 21:43 EEST</span>
<span class="t" style="left:1181.84px;top:95.00px;font:11px/15px 'Liberation Sans',sans-serif;color:#535D6D;letter-spacing:-0.669px;">2K</span>
<span class="t" style="left:246.84px;top:115.00px;font:11px/15px 'Liberation Sans',sans-serif;color:#535D6D;letter-spacing:-0.126px;">IE Unicode expression sanitizing tests</span>
<span class="t" style="left:509.84px;top:115.00px;font:11px/15px 'Liberation Sans',sans-serif;color:#535D6D;letter-spacing:0.622px;">test</span>
<span class="t" style="left:818.84px;top:115.00px;font:11px/15px 'Liberation Sans',sans-serif;color:#535D6D;letter-spacing:-0.088px;">Sunday, August 13, 2006 21:43 EEST</span>
<span class="t" style="left:1181.84px;top:115.00px;font:11px/15px 'Liberation Sans',sans-serif;color:#535D6D;letter-spacing:-0.669px;">3K</span>
<span class="t" style="left:246.84px;top:135.00px;font:11px/15px 'Liberation Sans',sans-serif;color:#ffffff;letter-spacing:-0.024px;">iso-8859-13</span>
<span class="t" style="left:509.84px;top:135.00px;font:11px/15px 'Liberation Sans',sans-serif;color:#ffffff;letter-spacing:-0.139px;">Tomas</span>
<span class="t" style="left:818.84px;top:135.00px;font:11px/15px 'Liberation Sans',sans-serif;color:#ffffff;letter-spacing:-0.146px;">Monday, December 14, 2009 10:26 EET</span>
<span class="t" style="left:1181.84px;top:135.00px;font:11px/15px 'Liberation Sans',sans-serif;color:#ffffff;letter-spacing:-0.669px;">2K</span>
<span class="t" style="left:246.84px;top:155.00px;font:11px/15px 'Liberation Sans',sans-serif;color:#535D6D;letter-spacing:-0.043px;">iso-8859-4</span>
<span class="t" style="left:509.84px;top:155.00px;font:11px/15px 'Liberation Sans',sans-serif;color:#535D6D;letter-spacing:-0.139px;">Tomas</span>
<span class="t" style="left:818.84px;top:155.00px;font:11px/15px 'Liberation Sans',sans-serif;color:#535D6D;letter-spacing:-0.146px;">Monday, December 14, 2009 10:27 EET</span>
<span class="t" style="left:1181.84px;top:155.00px;font:11px/15px 'Liberation Sans',sans-serif;color:#535D6D;letter-spacing:-0.669px;">2K</span>
<span class="t" style="left:47.33px;top:206.00px;font:14.5px/20px 'Liberation Sans',sans-serif;color:#000;letter-spacing:0.933px;">Inspect</span>
<span class="t" style="left:110.83px;top:206.00px;font:14.5px/20px 'Liberation Sans',sans-serif;color:#000;letter-spacing:0.650px;">Edit</span>
<span class="t" style="left:158.63px;top:206.00px;font:bold 14.5px/20px 'Liberation Sans',sans-serif;color:#000;-webkit-text-stroke:0.3px currentColor;letter-spacing:1.158px;">body.main</span>
<span class="t" style="left:244.21px;top:204.00px;font:16.5px/23px 'Liberation Sans',sans-serif;color:#a8a8a8;">&lt;</span>
<span class="t" style="left:258.63px;top:206.00px;font:14.5px/20px 'Liberation Sans',sans-serif;color:#000;letter-spacing:1.098px;">html</span>
<span class="t" style="left:13.07px;top:235.00px;font:bold 11.3px/16px 'Liberation Sans',sans-serif;color:#8a8a8a;-webkit-text-stroke:0.3px currentColor;letter-spacing:1.217px;">Console</span>
<span class="t" style="left:83.07px;top:235.00px;font:bold 11.3px/16px 'Liberation Sans',sans-serif;color:#000;-webkit-text-stroke:0.3px currentColor;letter-spacing:1.168px;">HTML</span>
<span class="t" style="left:136.07px;top:235.00px;font:bold 11.3px/16px 'Liberation Sans',sans-serif;color:#565656;-webkit-text-stroke:0.3px currentColor;letter-spacing:0.573px;">CSS</span>
<span class="t" style="left:178.82px;top:235.00px;font:bold 11.3px/16px 'Liberation Sans',sans-serif;color:#8a8a8a;-webkit-text-stroke:0.3px currentColor;letter-spacing:1.023px;">Script</span>
<span class="t" style="left:233.82px;top:235.00px;font:bold 11.3px/16px 'Liberation Sans',sans-serif;color:#565656;-webkit-text-stroke:0.3px currentColor;letter-spacing:2.010px;">DOM</span>
<span class="t" style="left:281.82px;top:235.00px;font:bold 11.3px/16px 'Liberation Sans',sans-serif;color:#9a9a9a;-webkit-text-stroke:0.3px currentColor;letter-spacing:2.088px;">Net</span>
<span class="t" style="left:885.07px;top:235.00px;font:bold 11.3px/16px 'Liberation Sans',sans-serif;color:#000;-webkit-text-stroke:0.3px currentColor;letter-spacing:1.154px;">Style</span>
<span class="t" style="left:934.82px;top:235.00px;font:bold 11.3px/16px 'Liberation Sans',sans-serif;color:#565656;-webkit-text-stroke:0.3px currentColor;letter-spacing:1.320px;">Layout</span>
<span class="t" style="left:995.57px;top:235.00px;font:bold 11.3px/16px 'Liberation Sans',sans-serif;color:#565656;-webkit-text-stroke:0.3px currentColor;letter-spacing:2.010px;">DOM</span>
<span class="t" style="left:781.63px;top:234.00px;font:14.5px/20px 'Liberation Sans',sans-serif;color:#000;letter-spacing:0.703px;">Options</span>
<span class="t" style="left:1195.73px;top:234.00px;font:14.5px/20px 'Liberation Sans',sans-serif;color:#000;letter-spacing:0.694px;">Options</span>
<span class="t" style="left:7.56px;top:549.00px;font:14px/20px 'Liberation Sans',sans-serif;color:#000;letter-spacing:0.896px;">Dokumentas įkeltas</span>
<span class="t" style="left:1154.31px;top:258.00px;font:bold 11.5px/16px 'Liberation Sans',sans-serif;color:#0000ff;-webkit-text-stroke:0.3px currentColor;letter-spacing:0.992px;">generic.css (line 7)</span>
</div>
</body></html>
